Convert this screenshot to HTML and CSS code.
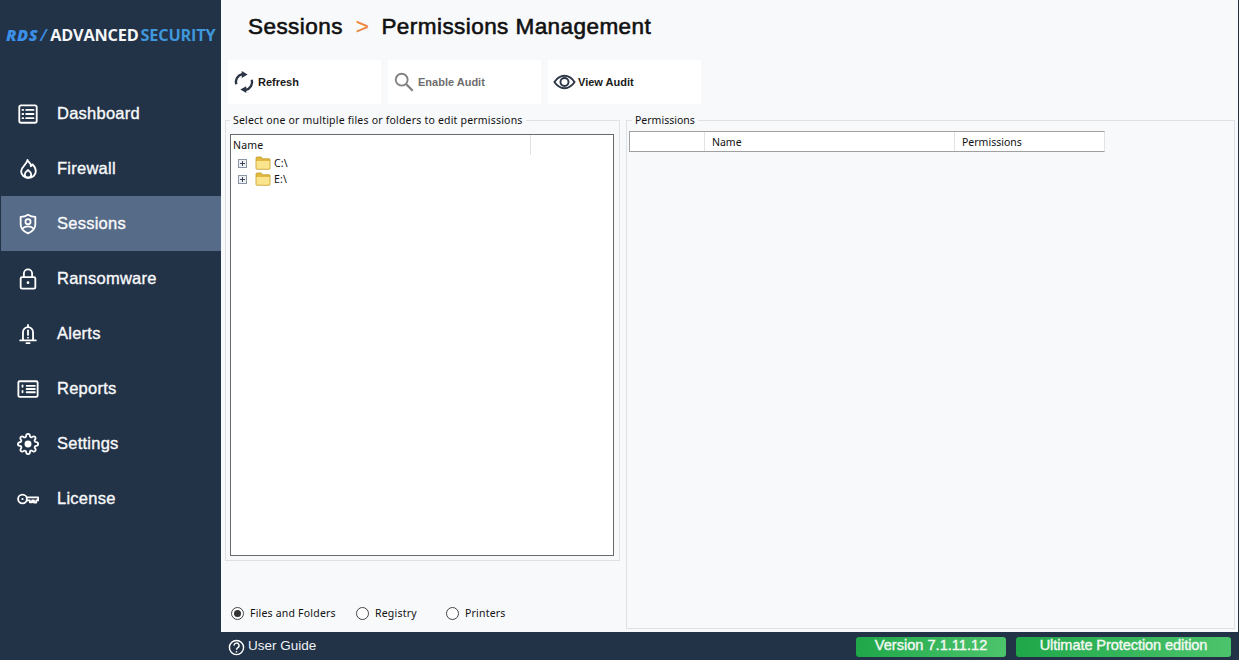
FILE: index.html
```html
<!DOCTYPE html>
<html lang="en">
<head>
<meta charset="utf-8">
<title>RDS Advanced Security</title>
<link rel="stylesheet" href="styles.css">
</head>
<body>
<div class="app">
  <aside class="sidebar">
    <div class="logo"><span class="logo-rds">RDS</span><span class="logo-slash">/</span><span class="logo-adv">ADVANCED</span><span class="logo-sec">SECURITY</span></div>
    <nav class="nav">
      <a class="nav-item"><svg class="nav-icon" viewBox="0 0 24 24"><rect x="2.500" y="2.500" width="19" height="19" rx="2"/><path d="M10 7.500h8M10 12h8M10 16.500h8M6 7.500h.8M6 12h.8M6 16.500h.8"/></svg><span>Dashboard</span></a>
      <a class="nav-item"><svg class="nav-icon" viewBox="0 0 24 24"><path d="M11.500 2c.5 3 4.500 3.500 3.600 7 1-.5 1.600-1.200 1.900-2 2 2 3.500 4.500 3.500 7.500 0 4.200-3.600 7-8 7s-8-2.800-8-7C4.500 9.500 10.500 7.500 11.500 2z"/><path d="M12 13c-2 1.500-3.500 3-3.500 5 0 1.500 1 3.500 3.500 3.500s3.500-2 3.500-3.500c0-2-1.500-3.500-3.500-5z"/></svg><span>Firewall</span></a>
      <a class="nav-item active"><svg class="nav-icon" viewBox="0 0 24 24"><path d="M12 1.800c2.500 1.700 5 2.400 8 2.500v8c0 4.700-3.300 8-8 10-4.700-2-8-5.300-8-10v-8c3-.1 5.500-.8 8-2.500z"/><circle cx="12" cy="9.500" r="2.800"/><path d="M6.500 16.500c1.500-1.500 3.400-2 5.500-2s4 .5 5.500 2"/></svg><span>Sessions</span></a>
      <a class="nav-item"><svg class="nav-icon" viewBox="0 0 24 24"><rect x="4" y="10" width="16" height="12.500" rx="1.500"/><path d="M7.500 10V6a4.500 4.500 0 0 1 9 0v4"/><circle class="dot" cx="12" cy="16" r="1.500"/></svg><span>Ransomware</span></a>
      <a class="nav-item"><svg class="nav-icon" viewBox="0 0 24 24"><path d="M6.500 19V10a5.500 5.500 0 0 1 11 0v9M3.500 19h17M12 2v2.500M10.300 22h3.400M12 8v5"/><circle class="dot" cx="12" cy="16" r="1"/></svg><span>Alerts</span></a>
      <a class="nav-item"><svg class="nav-icon" viewBox="0 0 24 24"><rect x="1.500" y="3.500" width="21" height="17" rx="1.500"/><path d="M10.500 8.500h9M10.500 12h9M10.500 15.500h9M6 8v1.500M6 14v1.500"/></svg><span>Reports</span></a>
      <a class="nav-item"><svg class="nav-icon" viewBox="0 0 24 24"><path d="M19.400 15a1.650 1.650 0 0 0 .33 1.820l.06.06a2 2 0 0 1 0 2.830 2 2 0 0 1-2.830 0l-.06-.06a1.650 1.650 0 0 0-1.820-.33 1.650 1.650 0 0 0-1 1.510V21a2 2 0 0 1-2 2 2 2 0 0 1-2-2v-.09A1.650 1.650 0 0 0 9 19.400a1.650 1.650 0 0 0-1.820.33l-.06.06a2 2 0 0 1-2.830 0 2 2 0 0 1 0-2.830l.06-.06a1.650 1.650 0 0 0 .33-1.820 1.650 1.650 0 0 0-1.510-1H3a2 2 0 0 1-2-2 2 2 0 0 1 2-2h.09A1.650 1.650 0 0 0 4.600 9a1.650 1.650 0 0 0-.33-1.820l-.06-.06a2 2 0 0 1 0-2.830 2 2 0 0 1 2.830 0l.06.06a1.650 1.650 0 0 0 1.820.33H9a1.650 1.650 0 0 0 1-1.510V3a2 2 0 0 1 2-2 2 2 0 0 1 2 2v.09a1.650 1.650 0 0 0 1 1.510 1.650 1.650 0 0 0 1.820-.33l.06-.06a2 2 0 0 1 2.830 0 2 2 0 0 1 0 2.830l-.06.06a1.650 1.650 0 0 0-.33 1.820V9a1.650 1.650 0 0 0 1.510 1H21a2 2 0 0 1 2 2 2 2 0 0 1-2 2h-.09a1.650 1.650 0 0 0-1.510 1z"/><circle class="dot" cx="12" cy="12" r="3.800"/></svg><span>Settings</span></a>
      <a class="nav-item"><svg class="nav-icon" viewBox="0 0 24 24"><circle cx="6" cy="12" r="4.800"/><circle class="dot" cx="6" cy="12" r="1.200"/><path d="M10.800 10.200H23v3.300h-2v2.300h-2.500v-2.300h-2v2h-2.500v-2h-3.200"/></svg><span>License</span></a>
    </nav>
  </aside>
  <main class="main">
    <h1 class="title"><span>Sessions</span><span class="sep">&gt;</span><span>Permissions Management</span></h1>
    <div class="toolbar">
      <button class="tool"><svg class="tool-icon" viewBox="0 0 24 24"><path class="stroke heavy" d="M3.500 14.500A8.800 8.800 0 0 1 10 3.500M20.500 9.500A8.800 8.800 0 0 1 14 20.500"/><path class="fill" d="M9.500 0l6.500 3.700-6.500 3.800zM14.500 24l-6.500-3.700 6.500-3.800z"/></svg><span>Refresh</span></button>
      <button class="tool disabled"><svg class="tool-icon" viewBox="0 0 24 24"><circle class="stroke" cx="9.500" cy="9.500" r="6.500"/><path class="stroke thick" d="M14.500 14.500l7 7"/></svg><span>Enable Audit</span></button>
      <button class="tool tight"><svg class="tool-icon wide" viewBox="0 0 24 16"><path class="stroke" d="M1.500 8C4.500 3.500 8 1.500 12 1.500S19.500 3.500 22.500 8c-3 4.500-6.500 6.500-10.500 6.500S4.500 12.500 1.500 8z"/><circle class="stroke" cx="12" cy="8" r="4.200"/></svg><span>View Audit</span></button>
    </div>
    <div class="panels">
      <div class="left-col">
        <fieldset class="group tree-group">
          <legend>Select one or multiple files or folders to edit permissions</legend>
          <div class="tree">
            <div class="tree-head"><span class="tree-name">Name</span><span class="tree-rest"></span></div>
            <div class="tree-row"><span class="plus"></span><svg class="folder" viewBox="0 0 16 14"><path d="M1 3.200V12.500c0 .4.300.7.700.7h12.600c.4 0 .7-.3.700-.7V3.500c0-.4-.3-.7-.7-.7H7.500L6.300 1H2c-.6 0-1 .5-1 1.200z"/><path class="folder-front" d="M1.500 5h13v7.700h-13z"/></svg><span>C:\</span></div>
            <div class="tree-row"><span class="plus"></span><svg class="folder" viewBox="0 0 16 14"><path d="M1 3.200V12.500c0 .4.300.7.700.7h12.600c.4 0 .7-.3.700-.7V3.500c0-.4-.3-.7-.7-.7H7.500L6.300 1H2c-.6 0-1 .5-1 1.200z"/><path class="folder-front" d="M1.500 5h13v7.700h-13z"/></svg><span>E:\</span></div>
          </div>
        </fieldset>
        <div class="radios">
          <label class="radio r1"><span class="radio-mark checked"></span>Files and Folders</label>
          <label class="radio r2"><span class="radio-mark"></span>Registry</label>
          <label class="radio"><span class="radio-mark"></span>Printers</label>
        </div>
      </div>
      <fieldset class="group perm-group">
        <legend>Permissions</legend>
        <div class="perm-table">
          <span class="c0"></span><span class="c1">Name</span><span class="c2">Permissions</span>
        </div>
      </fieldset>
    </div>
    <footer class="footer">
      <a class="guide"><svg class="help" viewBox="0 0 18 18"><circle cx="9" cy="9" r="7.500"/><path d="M6.500 7a2.600 2.600 0 1 1 3.900 2.200C9.400 9.800 9 10.300 9 11.300"/><circle class="dot" cx="9" cy="13.500" r=".9"/></svg><span class="guide-text">User Guide</span></a>
      <span class="badge b1">Version 7.1.11.12</span>
      <span class="badge b2">Ultimate Protection edition</span>
    </footer>
  </main>
</div>
</body>
</html>
```

FILE: styles.css
```css
* { box-sizing: border-box; }
html, body { margin: 0; height: 100%; overflow: hidden; }
body { font-family: "Liberation Sans", Arial, sans-serif; background: #f8f9fb; }
.app { display: flex; width: 1239px; height: 660px; }

.sidebar { width: 221px; flex: none; background: #223247; color: #fff; }
.logo { height: 86px; padding: 25px 0 0 6px; font-family: "Open Sans", sans-serif; font-weight: 700; font-size: 16.300px; line-height: 20px; white-space: nowrap; letter-spacing: -.2px; }
.logo-rds { color: #3b8fe6; font-style: italic; font-weight: 800; letter-spacing: .5px; }
.logo-slash { color: #3b8fe6; font-style: italic; margin: 0 4px 0 2px; font-weight: 600; }
.logo-adv { color: #f4f6f8; }
.logo-sec { color: #3f97dc; margin-left: 2px; }
.nav { display: flex; flex-direction: column; }
.nav-item { display: flex; align-items: center; height: 55px; padding-left: 17px; font-size: 16.500px; letter-spacing: .25px; -webkit-text-stroke: .35px #fff; color: #f4f6f8; }
.nav-item.active { background: #566b87; margin-left: 1px; padding-left: 16px; }
.nav-icon { width: 22px; height: 22px; margin-right: 18px; fill: none; stroke: #fff; stroke-width: 2; stroke-linejoin: round; stroke-linecap: round; flex: none; }
.nav-icon .dot { fill: #fff; stroke: none; }

.main { flex: 1; display: flex; flex-direction: column; min-width: 0; border-right: 1px solid #223247; }
.title { margin: 0; height: 60px; padding: 14px 0 0 27px; display: flex; gap: 12px; font-size: 22.500px; line-height: 26px; font-weight: 400; color: #111; -webkit-text-stroke: .6px #111; letter-spacing: .44px; }
.title .sep { color: #f0873e; -webkit-text-stroke: .3px #f0873e; margin-left: 1px; }
.toolbar { display: flex; gap: 7px; height: 44px; padding-left: 7px; }
.tool { width: 153px; height: 44px; border: 0; background: #fff; display: flex; align-items: center; gap: 3px; padding: 0 0 0 5px; font-family: "Liberation Sans", sans-serif; font-size: 11px; font-weight: 700; color: #1a1a1a; text-align: left; }
.tool.disabled { color: #6d6d6d; }
.tool.disabled .stroke { stroke: #808080; }
.tool-icon { width: 22px; height: 22px; flex: none; }
.tool-icon.wide { width: 23px; height: 16px; }
.tool .stroke { fill: none; stroke: #2c3646; stroke-width: 2; }
.tool .stroke.heavy { stroke-width: 2.600; }
.tool .stroke.thick { stroke-width: 2.500; }
.tool .fill { fill: #2c3646; }
.tool.tight { gap: 2px; }

.panels { flex: 1; display: flex; padding: 9px 3px 3px 4px; gap: 6px; min-height: 0; }
.left-col { width: 395px; flex: none; display: flex; flex-direction: column; }
.group { margin: 0; padding: 0; border: 1px solid #dfe2e5; min-width: 0; font-family: "Noto Sans", sans-serif; font-size: 10.500px; color: #111; letter-spacing: .2px; }
.group legend { padding: 0 3px; line-height: 15px; }
.tree-group { height: 448px; padding: 6px 5px 4px 4px; }
.tree-group legend { margin-left: 0; }
.tree { height: 422px; border: 1px solid #6a6a6a; background: #fff; }
.tree-head { display: flex; height: 20px; align-items: center; }
.tree-name { width: 300px; padding-left: 2px; height: 20px; line-height: 20px; border-right: 1px solid #e3e3e3; }
.tree-row { display: flex; align-items: center; height: 16px; padding-left: 7px; }
.plus { position: relative; width: 9px; height: 9px; border: 1px solid #8a96a5; background: #eef0f4; margin-right: 8px; }
.plus::before { content: ""; position: absolute; left: 1px; top: 3px; width: 5px; height: 1px; background: #38465c; }
.plus::after { content: ""; position: absolute; left: 3px; top: 1px; width: 1px; height: 5px; background: #38465c; }
.folder { width: 16px; height: 14px; margin-right: 3px; fill: #e3b93f; stroke: #c39a2a; stroke-width: .8; }
.folder .folder-front { fill: #fbe48e; stroke: none; }
.radios { flex: 1; display: flex; align-items: flex-end; padding: 0 0 8px 6px; }
.radio { display: flex; align-items: center; font-family: "Noto Sans", sans-serif; font-size: 10.500px; line-height: 16px; color: #111; letter-spacing: .2px; }
.radio.r1 { width: 125px; }
.radio.r2 { width: 90px; }
.radio-mark { width: 13px; height: 13px; border: 1px solid #444; border-radius: 50%; background: #fff; margin-right: 6px; position: relative; }
.radio-mark.checked::after { content: ""; position: absolute; inset: 2px; border-radius: 50%; background: #333; }
.perm-group { flex: 1; padding: 3px 0 0 2px; letter-spacing: 0; }
.perm-group legend { margin-left: 3px; }
.perm-table { display: flex; width: 476px; height: 21px; background: #fff; border-top: 1px solid #a0a0a0; border-bottom: 1px solid #a0a0a0; border-left: 1px solid #a0a0a0; border-right: 1px solid #e3e3e3; line-height: 19px; }
.perm-table span { display: block; border-right: 1px solid #e3e3e3; padding: 1px 0 0 7px; }
.c0 { width: 75px; }
.c1 { width: 250px; }
.c2 { flex: 1; border-right: 0 !important; }

.footer { height: 28px; flex: none; background: #223247; display: flex; align-items: center; padding-left: 7px; }
.guide { display: flex; align-items: center; color: #f0f2f5; font-size: 13.500px; width: 628px; gap: 3px; }
.guide-text { margin-top: -2px; }
.help { width: 17px; height: 17px; fill: none; stroke: #fff; stroke-width: 1.500; margin-top: 2px; }
.help .dot { fill: #fff; stroke: none; }
.badge { height: 20px; margin-top: 2px; border-radius: 3px; background: linear-gradient(90deg, #1fa749, #4cc46b); color: #f2f8f2; font-size: 14.600px; line-height: 17px; text-align: center; -webkit-text-stroke: .4px #f2f8f2; }
.b1 { width: 150px; margin-right: 10px; }
.b2 { width: 215px; letter-spacing: -.1px; }
```
